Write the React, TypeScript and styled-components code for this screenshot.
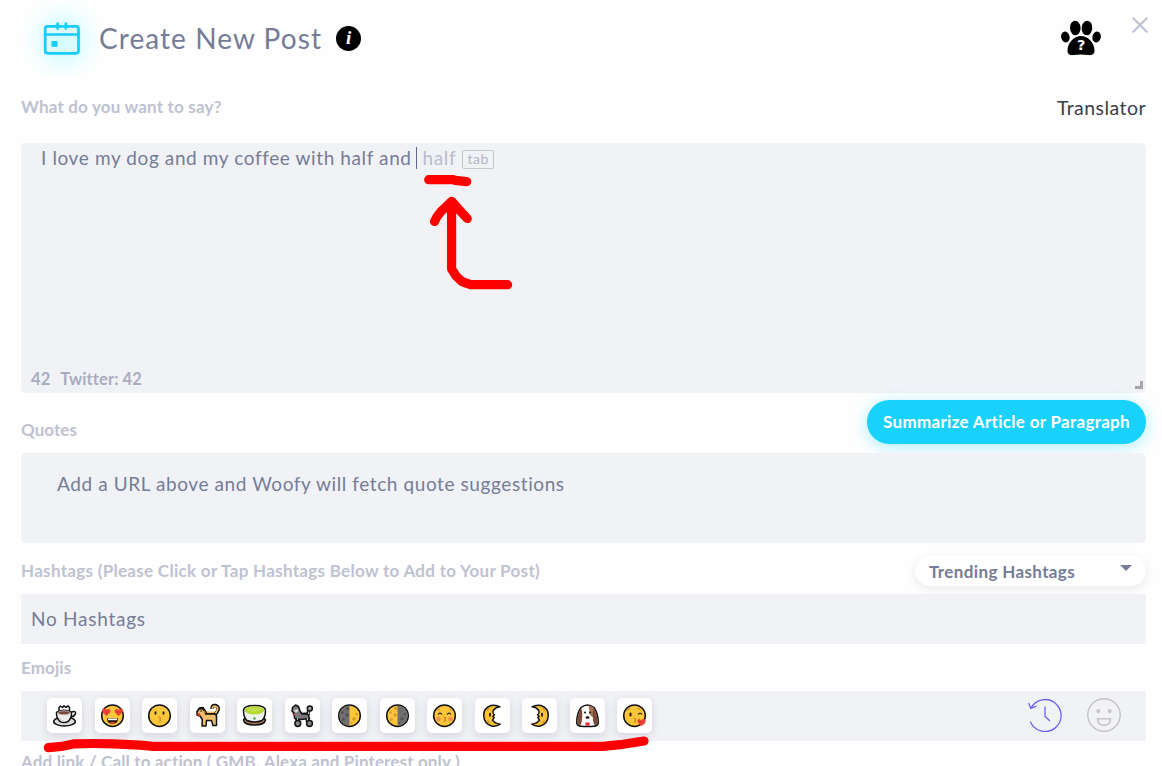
import React from "react";
import styled, { createGlobalStyle, css } from "styled-components";

const GlobalStyle = createGlobalStyle`
  * { box-sizing: border-box; }
  html, body { margin: 0; padding: 0; background: #fff; overflow: hidden; }
  body { font-family: Lato, "Liberation Sans", sans-serif; color: #757c98; }
`;

const Dialog = styled.main`
  position: relative;
  width: 1162px;
  height: 766px;
  overflow: hidden;
  padding: 0 16px 0 21px;
  background: #fefefe;
  display: flex;
  flex-direction: column;
`;

const Header = styled.header`
  height: 77px;
  flex: none;
  display: flex;
  align-items: center;
  margin-right: -2px;
`;

const CalendarBadge = styled.div`
  width: 82px;
  height: 77px;
  margin-left: -4px;
  flex: none;
  background: radial-gradient(circle at 46px 40px, #d3fbff 0, #e0fcff 18px, #f2feff 29px, #fefefe 43px);
  svg { display: block; }
`;

const Title = styled.h1`
  margin: 0 0 2px;
  font-size: 28px;
  line-height: 36px;
  font-weight: 400;
  letter-spacing: 1.07px;
  white-space: nowrap;
  color: #757c98;
`;

const InfoDot = styled.span`
  width: 25px;
  height: 25px;
  margin-left: 14px;
  border-radius: 50%;
  background: #000;
  color: #fff;
  font: italic 700 19px/24px "Liberation Serif", serif;
  text-align: center;
`;

const HeaderActions = styled.div`
  margin-left: auto;
  display: flex;
  align-items: flex-start;
  gap: 31px;
  height: 77px;
  svg { display: block; }
`;

const PawButton = styled.div`
  padding-top: 20px;
`;

const CloseButton = styled.div`
  padding-top: 17px;
`;

const LabelRow = styled.div<{ $height: number; $top?: number }>`
  height: ${(p) => p.$height}px;
  padding-top: ${(p) => p.$top ?? 0}px;
  flex: none;
  display: flex;
  align-items: center;
  justify-content: space-between;
`;

const Label = styled.label<{ $spacing?: number; $top?: number; $bottom?: number }>`
  padding: ${(p) => p.$top ?? 0}px 0 ${(p) => p.$bottom ?? 0}px;
  font-size: 17px;
  line-height: 20px;
  font-weight: 700;
  white-space: nowrap;
  letter-spacing: ${(p) => p.$spacing ?? 0}px;
  color: #bfc2d1;
`;

const Translator = styled.a`
  font-size: 19.5px;
  line-height: 24px;
  letter-spacing: 0.45px;
  margin-top: -5px;
  color: #3b3f4a;
`;

const bodyText = css`
  font-size: 19px;
  line-height: 22px;
  white-space: nowrap;
`;

const Panel = styled.section<{ $height: number; $radius?: number }>`
  height: ${(p) => p.$height}px;
  flex: none;
  border-radius: ${(p) => p.$radius ?? 0}px;
  background: #f1f2f6;
`;

const Editor = styled(Panel)`
  display: flex;
  flex-direction: column;
  justify-content: space-between;
  padding: 4px 3px 3px 10px;
`;

const EditorLine = styled.div`
  ${bodyText}
  display: flex;
  align-items: center;
  padding-left: 10px;
  letter-spacing: 0.61px;
`;

const Caret = styled.i`
  width: 1px;
  height: 22px;
  margin: 0 6px 0 4px;
  background: #60678a;
`;

const Suggestion = styled.span`
  color: #b9bccb;
  letter-spacing: 0.6px;
`;

const TabKey = styled.kbd`
  width: 32px;
  height: 19px;
  margin: 2px 0 0 6px;
  border: 1px solid #c5c7d3;
  border-radius: 2px;
  color: #b2b5c6;
  font: 400 14px/15px Lato, sans-serif;
  letter-spacing: 0.5px;
  text-align: center;
`;

const EditorFooter = styled.div`
  display: flex;
  align-items: flex-end;
  justify-content: space-between;
`;

const Counts = styled.div`
  display: flex;
  gap: 10px;
  padding-bottom: 1px;
  font-size: 16.5px;
  line-height: 20px;
  font-weight: 700;
  letter-spacing: 0.1px;
  color: #a9adc0;
`;

const ResizeCorner = styled.i`
  width: 8px;
  height: 8px;
  margin-bottom: 1px;
  border: solid #a6a6a8;
  border-width: 0 3px 3px 0;
`;

const PrimaryButton = styled.button`
  width: 279px;
  height: 44px;
  margin-top: -2px;
  padding: 0;
  border: 0;
  border-radius: 22px;
  background: #19d2fb;
  box-shadow: 0 3px 16px rgba(25, 210, 251, 0.36);
  color: #fff;
  font: 700 17px/44px Lato, sans-serif;
  letter-spacing: 0.3px;
  white-space: nowrap;
`;

const QuoteHint = styled.p`
  ${bodyText}
  margin: 0;
  padding: 20px 0 0 36px;
  letter-spacing: 0.59px;
`;

const Select = styled.div`
  width: 231px;
  height: 30px;
  display: flex;
  align-items: center;
  justify-content: space-between;
  padding: 0 14px;
  border-radius: 15px;
  background: #fff;
  box-shadow: 0 3px 10px rgba(70, 75, 100, 0.12);
  color: #757c98;
  font-size: 17px;
  font-weight: 700;
  letter-spacing: 0.37px;
`;

const SelectArrow = styled.i`
  margin-bottom: 6px;
  border: solid transparent;
  border-width: 6px 6px 0;
  border-top-color: #757c98;
`;

const HashtagText = styled.p`
  ${bodyText}
  margin: 0;
  padding: 14px 10px;
  letter-spacing: 0.75px;
`;

const EmojiPanel = styled(Panel)`
  display: flex;
  align-items: center;
  padding: 0 25px 1px 26px;
`;

const EmojiList = styled.div`
  display: flex;
  gap: 12.5px;
`;

const EmojiTile = styled.div`
  width: 35px;
  height: 35px;
  border-radius: 5px;
  background: #fff;
  box-shadow: 0 3px 9px rgba(60, 65, 90, 0.16);
  svg { display: block; }
`;

const EmojiTools = styled.div`
  display: flex;
  gap: 25px;
  margin-left: auto;
  padding-bottom: 1px;
  svg { display: block; }
`;

const NextLabel = styled.div`
  flex: none;
  padding-top: 11px;
`;

const Annotations = styled.svg`
  position: absolute;
  left: 0;
  top: 0;
  pointer-events: none;
`;

const ink = { stroke: "#111", strokeWidth: 1.5, strokeLinejoin: "round" as const, strokeLinecap: "round" as const };

const Coffee = () => (
  <>
    <path d="M12 13V9.500l1.500-1.500 2 1.500L17 7.800l2 1.500 2-1.500 1.500 1.700V13" fill="#fff" {...ink} />
    <ellipse cx="17.500" cy="23.500" rx="10.800" ry="4.500" fill="#dcdcde" {...ink} />
    <path d="M24.500 14q4.500-1.500 4 1.500-.5 2.500-4.500 3.500" fill="#fff" {...ink} />
    <path d="M9.500 14.500q7.500-4.500 15 0 .3 6-3.500 9-4 2-8 0-3.800-3-3.500-9z" fill="#efeff0" {...ink} />
    <path d="M11.500 18q.8 4 3 5.800l6-.1q-5 .3-9-5.700z" fill="#cfcfd2" />
    <ellipse cx="17" cy="14.800" rx="6.200" ry="2" fill="#7b4a35" stroke="#c8c8ca" strokeWidth=".8" />
  </>
);

const FaceBase = () => <circle cx="17.500" cy="17.700" r="10.800" fill="#fcc63a" {...ink} />;

const HeartEyes = () => (
  <>
    <FaceBase />
    <path d="M11.500 18l-4-4q-1-3 1.500-3.500 2-.2 2.700 1.500 1.500-2 3.300-.4 1 1 0 3zM23.500 18l-3.500-3.400q-1-2 .3-3 2-1.600 3.300.4.700-1.700 2.700-1.500 2.500.5 1.500 3.500z" fill="#eb3f35" />
    <path d="M12 20.300h11q0 5.500-5.500 5.500T12 20.300z" fill="#24170e" />
    <path d="M13 20.500h9v1.700h-9z" fill="#fff" />
    <path d="M14.500 24.800q3-2 6 0-3 1.500-6 0z" fill="#eb3f35" />
  </>
);

const Kissing = () => (
  <>
    <FaceBase />
    <ellipse cx="13.500" cy="15" rx="1" ry="1.700" fill="#1c140d" />
    <ellipse cx="21.500" cy="15" rx="1" ry="1.700" fill="#1c140d" />
    <path d="M16.500 19.200q3 0 1.300 2 2 1.500-1.300 2.500" fill="none" stroke="#d98a26" strokeWidth="1.200" />
  </>
);

const Dog = () => (
  <>
    <path d="M7 13.500l2.500-3.500 3.500-.5 3 4.500v2h7q3-.5 3.500-2.500" fill="#f2bd68" {...ink} />
    <path d="M22 11q0-4 3.500-3.500 3.500.8 2.500 4.500-1 3-3 4" fill="none" stroke="#111" strokeWidth="3.600" />
    <path d="M22.300 11q0-3.300 3.200-2.800 3 .8 2 3.500-1 3-3 4" fill="none" stroke="#f2bd68" strokeWidth="1.600" />
    <path d="M7 14.500l2-3.500 3.500-.5 3 4v1.500h9.500q2 1 1.500 4v7.500h-3.500l-1.500-5h-5l-.5 5.500H12l.3-6.500-2.300-3.500-3-1z" fill="#f2bd68" {...ink} />
    <path d="M7 15.500l2.500-.5 1 3-2 1z" fill="#d93431" />
    <circle cx="11" cy="13" r=".8" fill="#111" />
    <path d="M13 12l2.500 1.500v3z" fill="#c98332" />
  </>
);

const Tea = () => (
  <>
    <path d="M8 20l-1.500 2q1 5 11 5t11-5L27 20z" fill="#a9795b" {...ink} />
    <path d="M6.500 12.500q0-5 11-5t11 5q0 7-3.500 10-7.500 3-15 0-3.500-3-3.500-10z" fill="#edf2ef" {...ink} />
    <ellipse cx="17.500" cy="12.300" rx="9.800" ry="4" fill="#b4d82e" />
    <path d="M12 12.500l2-3m1 4l2-3m1 3l2-3m1 2l2-2" stroke="#e9f6a4" strokeWidth=".9" />
    <circle cx="17.500" cy="20.500" r="1.300" fill="#59a737" />
  </>
);

const Poodle = () => (
  <>
    <path d="M17 16.500l6-.5 1-4.500" fill="none" stroke="#111" strokeWidth="3.500" />
    <path d="M7 13l.5-3.500 3-2.500 3 1.500 1.500 4.500 2 3 6-.3 1.500 5.300h-4l-5 .5-3 1.500-3-3-.5-4.500z" fill="#77797d" {...ink} />
    <path d="M23.500 16l.5-4" stroke="#c3c4c6" strokeWidth="1.300" />
    <circle cx="24.800" cy="10.500" r="2.500" fill="#a4a6aa" {...ink} />
    <path d="M12.500 20v4M22.500 20v4" stroke="#111" strokeWidth="3.600" />
    <path d="M12.500 20v4M22.500 20v4" stroke="#c3c4c6" strokeWidth="1.200" />
    <circle cx="12.800" cy="25.500" r="2.900" fill="#85868a" {...ink} />
    <circle cx="24.500" cy="25.500" r="2.900" fill="#85868a" {...ink} />
    <path d="M8.500 12.500l4-1.500 1 2-2.500 1.800z" fill="#ddd" />
    <path d="M7.500 15.800h2.500v1.600H8z" fill="#df3838" />
  </>
);

const HalfMoon = ({ litRight }: { litRight: boolean }) => (
  <>
    <FaceBase />
    <path d={litRight ? "M17.500 7.500a10.200 10.200 0 0 0 0 20.400z" : "M17.500 7.500a10.200 10.200 0 0 1 0 20.400z"} fill="#6f6f71" />
    <g fill={litRight ? "#505052" : "#d99a25"}>
      <circle cx="15.500" cy="10.500" r="1.600" />
      <circle cx="10.500" cy="14.500" r="1.300" />
      <circle cx="15" cy="17" r="1.700" />
      <circle cx="11.500" cy="21.500" r="1.500" />
    </g>
    <g fill={litRight ? "#d99a25" : "#505052"}>
      <circle cx="24.500" cy="16" r="1.200" />
      <circle cx="22" cy="21" r="1.700" />
      <circle cx="19.500" cy="25" r="1" />
    </g>
  </>
);

const KissClosed = () => (
  <>
    <FaceBase />
    <circle cx="11.500" cy="21" r="2.300" fill="#f28c55" />
    <circle cx="23.500" cy="21" r="2.300" fill="#f28c55" />
    <path d="M11 16.500q2-2.800 4 0M20 16.500q2-2.800 4 0" fill="none" stroke="#24180f" strokeWidth="1.200" />
    <path d="M10.500 12l2-1M24.500 12l-2-1M16.500 19q3 0 1.300 2 2 1.500-1.300 2.500" fill="none" stroke="#d07e24" strokeWidth="1.100" />
  </>
);

const CrescentFace = () => (
  <>
    <path d="M25 8.800q-4-2.300-9-1.300-7.500 2.500-7.300 10.200.5 8 8 10.300 4.800.8 8.500-1.800-5.500-.7-7.700-4l1.700-2.500-1.300-1.200 1.600-1.700q-2-1.300-1.500-3.800 2-3.500 7-4.200z" fill="#f9c338" {...ink} />
    <path d="M15 15.500v2.300" stroke="#111" strokeWidth="1.700" strokeLinecap="round" />
    <path d="M12.500 12l1.500-1.500M12.500 23l2 1.500" stroke="#d99720" strokeWidth="1.500" strokeLinecap="round" />
  </>
);

const DogFace = () => (
  <>
    <path d="M11 9.500q6.500-5 13 0 4.500 6 4.200 16-.7 2.500-4 2.700-6.700.8-13.400 0-3.300-.2-4-2.700-.3-10 4.200-16z" fill="#fafafa" {...ink} />
    <path d="M18.500 7.500q5 .5 6 4.500.5 6-2 7-3-1-3-6z" fill="#a9714f" />
    <path d="M11 10.500q1.300 1 1.300 7t-1.600 9.500q-3 .3-3.300-2 0-9 3.600-14.500zM24 10.500q-1.300 1-1.300 7t1.600 9.500q3 .3 3.300-2 0-9-3.600-14.500z" fill="#7d4b35" />
    <circle cx="15" cy="14.500" r="1" fill="#111" />
    <circle cx="20" cy="14.500" r="1" fill="#111" />
    <ellipse cx="17.500" cy="19.500" rx="1.900" ry="1.200" fill="#111" />
    <path d="M15.200 24.500h4.600l-.5 3.300h-3.600z" fill="#e52f35" />
  </>
);

const BlowKiss = () => (
  <>
    <FaceBase />
    <path d="M13.500 15.500v2" stroke="#20160e" strokeWidth="2" strokeLinecap="round" />
    <path d="M21 16.300l2-1.200 2 1.200" fill="none" stroke="#20160e" strokeWidth="1.200" />
    <path d="M10 12.500q1.500-2 3.500-2M20.500 10.500l3.500 1M16.500 20q3 0 1.300 2 2 1.500-1.300 2.500" fill="none" stroke="#cf8a21" strokeWidth="1.200" />
    <path d="M24 28l-3.500-4q-.5-3 2-3l1.500 1.200q3-3 4.500 0 .8 3-4.500 5.800z" fill="#e83e36" />
  </>
);

const emojis: React.ReactNode[] = [
  <Coffee />,
  <HeartEyes />,
  <Kissing />,
  <Dog />,
  <Tea />,
  <Poodle />,
  <HalfMoon litRight />,
  <HalfMoon litRight={false} />,
  <KissClosed />,
  <CrescentFace />,
  <g transform="translate(35 0) scale(-1 1)"><CrescentFace /></g>,
  <DogFace />,
  <BlowKiss />,
];

const CalendarIcon = () => (
  <svg width="82" height="77" viewBox="17 0 82 77" fill="none" stroke="#16cdfa" strokeWidth="2.700" strokeLinecap="round">
    <rect x="45.200" y="26.300" width="33.300" height="27" rx="2.500" />
    <path d="M45 34.500h33.500M57.700 23.700v4.800M65.800 23.700v4.800" />
    <rect x="51.500" y="41" width="6" height="5.800" fill="#16cdfa" stroke="none" />
  </svg>
);

const PawIcon = () => (
  <svg width="40" height="36" viewBox="1061 20 40 36">
    <ellipse cx="1075.300" cy="28" rx="5.300" ry="7.300" transform="rotate(-4 1075 28)" />
    <ellipse cx="1087" cy="28" rx="5.300" ry="7.300" transform="rotate(4 1087 28)" />
    <ellipse cx="1065.400" cy="37" rx="4.200" ry="5.500" transform="rotate(-14 1065.400 37)" />
    <ellipse cx="1096.600" cy="37" rx="4.200" ry="5.500" transform="rotate(14 1096.600 37)" />
    <path d="M1081 36c7 0 13.500 7 13.500 14.500 0 4-3 5-6 4.600q-7.500-1.300-15 0c-3 .4-6-.6-6-4.600C1067.500 43 1074 36 1081 36z" />
    <text x="1081.300" y="50.300" textAnchor="middle" fill="#fff" fontFamily="DejaVu Sans, sans-serif" fontSize="14.500" fontWeight="700">?</text>
  </svg>
);

export default function App() {
  return (
    <>
      <GlobalStyle />
      <Dialog>
        <Header>
          <CalendarBadge><CalendarIcon /></CalendarBadge>
          <Title>Create New Post</Title>
          <InfoDot>i</InfoDot>
          <HeaderActions>
            <PawButton><PawIcon /></PawButton>
            <CloseButton>
              <svg width="16" height="16" viewBox="0 0 16 16" stroke="#bfc2d3" strokeWidth="2.200" strokeLinecap="round">
                <path d="M1.300 1.300l13.400 13.400M14.700 1.300L1.300 14.700" />
              </svg>
            </CloseButton>
          </HeaderActions>
        </Header>

        <LabelRow $height={66}>
          <Label $spacing={0.19} $bottom={6}>What do you want to say?</Label>
          <Translator>Translator</Translator>
        </LabelRow>
        <Editor $height={250} $radius={5}>
          <EditorLine>
            <span>I love my dog and my coffee with half and</span>
            <Caret />
            <Suggestion>half</Suggestion>
            <TabKey>tab</TabKey>
          </EditorLine>
          <EditorFooter>
            <Counts><span>42</span><span>Twitter: 42</span></Counts>
            <ResizeCorner />
          </EditorFooter>
        </Editor>

        <LabelRow $height={60}>
          <Label $spacing={0.07} $top={13}>Quotes</Label>
          <PrimaryButton>Summarize Article or Paragraph</PrimaryButton>
        </LabelRow>
        <Panel $height={90} $radius={5}>
          <QuoteHint>Add a URL above and Woofy will fetch quote suggestions</QuoteHint>
        </Panel>

        <LabelRow $height={51} $top={5}>
          <Label $spacing={0.3}>Hashtags (Please Click or Tap Hashtags Below to Add to Your Post)</Label>
          <Select>Trending Hashtags<SelectArrow /></Select>
        </LabelRow>
        <Panel $height={50}>
          <HashtagText>No Hashtags</HashtagText>
        </Panel>

        <LabelRow $height={47}>
          <Label $spacing={0.1}>Emojis</Label>
        </LabelRow>
        <EmojiPanel $height={50}>
          <EmojiList>
            {emojis.map((emoji, i) => (
              <EmojiTile key={i}>
                <svg width="35" height="35" viewBox="0 0 35 35">{emoji}</svg>
              </EmojiTile>
            ))}
          </EmojiList>
          <EmojiTools>
            <svg width="34" height="34" viewBox="0 0 34 34" fill="none" stroke="#6f60f5" strokeWidth="1.300" strokeLinecap="round" strokeLinejoin="round">
              <path d="M2.500 24A16 16 0 1 0 3 10M.800 5.500l2 5 5.200-2.200M17 9v9.500l4.500 4" />
            </svg>
            <svg width="34" height="34" viewBox="0 0 34 34" fill="none" stroke="#c4c4c6" strokeWidth="1.400">
              <circle cx="17" cy="17" r="16.200" />
              <path d="M10.500 20.800h13q0 6.500-6.500 6.500t-6.500-6.500z" />
              <circle cx="11.300" cy="13" r="2" fill="#c4c4c6" stroke="none" />
              <circle cx="22.700" cy="13" r="2" fill="#c4c4c6" stroke="none" />
            </svg>
          </EmojiTools>
        </EmojiPanel>
        <NextLabel>
          <Label $spacing={0.145}>Add link / Call to action ( GMB, Alexa and Pinterest only )</Label>
        </NextLabel>

        <Annotations width="1162" height="766" viewBox="0 0 1162 766" fill="none" stroke="#fe0000" strokeWidth="9.200" strokeLinecap="round" strokeLinejoin="round">
          <path d="M428.700 179.700h24.500l2 .7 11.500 1.200" />
          <path d="M434.500 221.500q2-5 6.500-10l10.700-10.200 7.500 8.500 8 8.700M451.600 203v66l4.500 7 6 5.700 8.500 3h37" />
          <path d="M48.300 747.700l13-1.300 12-2.500q20-.8 40 0l27 1.300 13 1.100h449.700l17-1.600 24-3.700" />
        </Annotations>
      </Dialog>
    </>
  );
}
